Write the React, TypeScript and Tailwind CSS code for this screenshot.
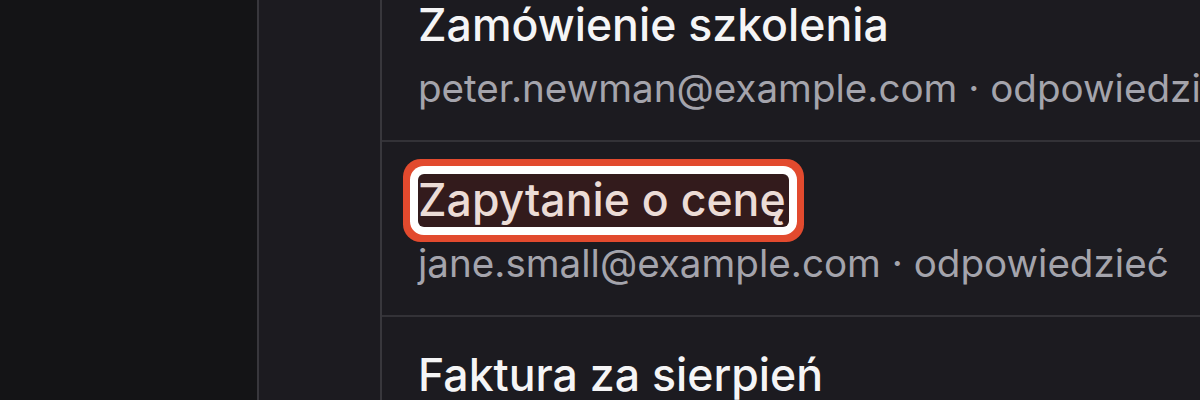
import React from "react";

type Item = { title: string; from: string; hl?: boolean };

const items: Item[] = [
  { title: "Zamówienie szkolenia", from: "peter.newman@example.com" },
  { title: "Zapytanie o cenę", from: "jane.small@example.com", hl: true },
  { title: "Faktura za sierpień", from: "anna.kowalska@example.com" },
];

export default function App() {
  return (
    <div
      className="flex h-[400px] w-[1200px] overflow-hidden bg-[#141416]"
      style={{ fontFamily: "Inter, 'Noto Sans', sans-serif" }}
    >
      <aside className="w-[257px] shrink-0 bg-[#141416]" />
      <div className="w-[2px] shrink-0 bg-[#38373c]" />
      <nav className="w-[121px] shrink-0 bg-[#1c1b20]" />
      <div className="w-[2px] shrink-0 bg-[#38373c]" />
      <main className="flex-1 overflow-hidden bg-[#1c1b20]">
        <ul className="mt-[-33px]">
          {items.map((it, i) => (
            <li
              key={i}
              className="border-b-2 border-[#333237] pl-[36px] pr-4 pt-[32px] pb-[29px] whitespace-nowrap"
            >
              <div className="text-[44.6px] leading-[53px] font-medium text-[#f5f5f6]">
                {it.hl ? (
                  <span className="inline-block rounded-[6px] bg-[#331b1c] pr-[3px] text-[#ecdcd6] shadow-[0_0_0_8px_#ffffff,0_0_0_15px_#e24a2e]">
                    {it.title}
                  </span>
                ) : (
                  it.title
                )}
              </div>
              <div className="mt-[13px] text-[38.6px] leading-[46px] text-[#a4a4ac]">
                {it.from} · odpowiedzieć
              </div>
            </li>
          ))}
        </ul>
      </main>
    </div>
  );
}
